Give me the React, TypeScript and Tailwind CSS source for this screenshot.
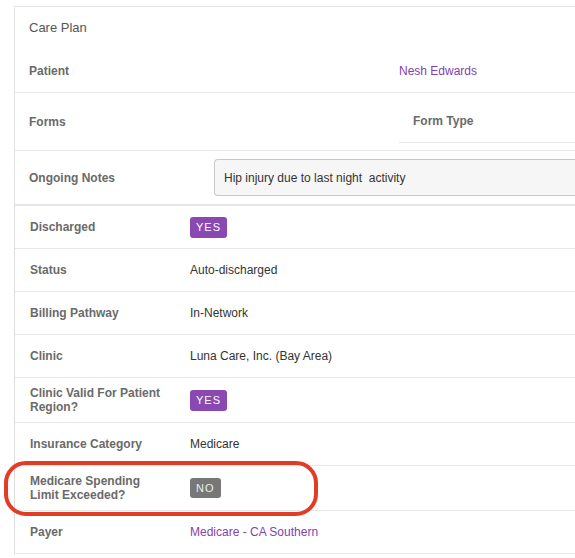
import React from "react";

type Row = {
  label: string;
  value: React.ReactNode;
};

const YesBadge = () => (
  <span className="inline-flex items-center justify-center h-[21px] px-[6px] rounded-[3px] bg-[#8a48b2] text-[11px] tracking-[1px] text-white">
    YES
  </span>
);

const NoBadge = () => (
  <span className="inline-flex items-center justify-center h-[20px] px-[6px] rounded-[3px] bg-[#777777] text-[11px] tracking-[1px] text-[#eeeeee]">
    NO
  </span>
);

const rows: Row[] = [
  { label: "Discharged", value: <YesBadge /> },
  { label: "Status", value: "Auto-discharged" },
  { label: "Billing Pathway", value: "In-Network" },
  { label: "Clinic", value: "Luna Care, Inc. (Bay Area)" },
  { label: "Clinic Valid For Patient Region?", value: <YesBadge /> },
  { label: "Insurance Category", value: "Medicare" },
  { label: "Medicare Spending Limit Exceeded?", value: <NoBadge /> },
  {
    label: "Payer",
    value: <span className="text-[#8541ae]">Medicare - CA Southern</span>,
  },
];

const Label: React.FC<{ children: React.ReactNode; className?: string }> = ({
  children,
  className = "",
}) => (
  <div
    className={`text-[12px] leading-[14px] font-bold text-[#6a6a6a] ${className}`}
  >
    {children}
  </div>
);

export default function App() {
  return (
    <div className="relative w-[575px] h-[558px] overflow-hidden bg-white font-['Liberation_Sans',Arial,sans-serif]">
      <div className="ml-[14px] mt-[6px] border-l border-t border-[#e4e4e4]">
        {/* header */}
        <div className="h-[42px] flex items-center pl-[14px] text-[13px] text-[#555]">
          Care Plan
        </div>

        {/* patient */}
        <div className="h-[44px] flex items-center border-b border-[#e8e8e8] pl-[14px]">
          <Label className="w-[370px]">Patient</Label>
          <span className="text-[12px] text-[#8541ae]">Nesh Edwards</span>
        </div>

        {/* forms */}
        <div className="h-[58px] flex border-b border-[#e8e8e8] pl-[14px]">
          <Label className="w-[370px] self-center">Forms</Label>
          <div className="flex-1 pt-[20px]">
            <div className="pl-[14px] pb-[13px] border-b border-[#e8e8e8]">
              <Label className="leading-[16px]">Form Type</Label>
            </div>
          </div>
        </div>

        {/* notes */}
        <div className="flex items-center border-b-2 border-[#e6e6e6] pl-[14px] pt-[8px] pb-[8px]">
          <Label className="w-[185px]">Ongoing Notes</Label>
          <div className="flex-1 h-[37px] flex items-center pl-[9px] bg-[#f6f6f6] border border-r-0 border-[#c9c9c9] rounded-l-[4px] text-[12px] text-[#333] whitespace-pre">
            Hip injury due to last night  activity
          </div>
        </div>

        {/* details */}
        <div className="border-l border-[#dcdcdc] -ml-px">
          {rows.map((row) => (
            <div
              key={row.label}
              className="min-h-[43px] flex items-center border-b border-[#e8e8e8] pl-[15px] py-[8px]"
            >
              <Label className="w-[134px] mr-[26px]">{row.label}</Label>
              <div className="text-[12px] text-[#333]">{row.value}</div>
            </div>
          ))}
        </div>
      </div>

      {/* annotation */}
      <div className="absolute left-[4px] top-[461px] w-[314px] h-[55px] border-4 border-[#e23b26] rounded-[22px]" />
    </div>
  );
}
